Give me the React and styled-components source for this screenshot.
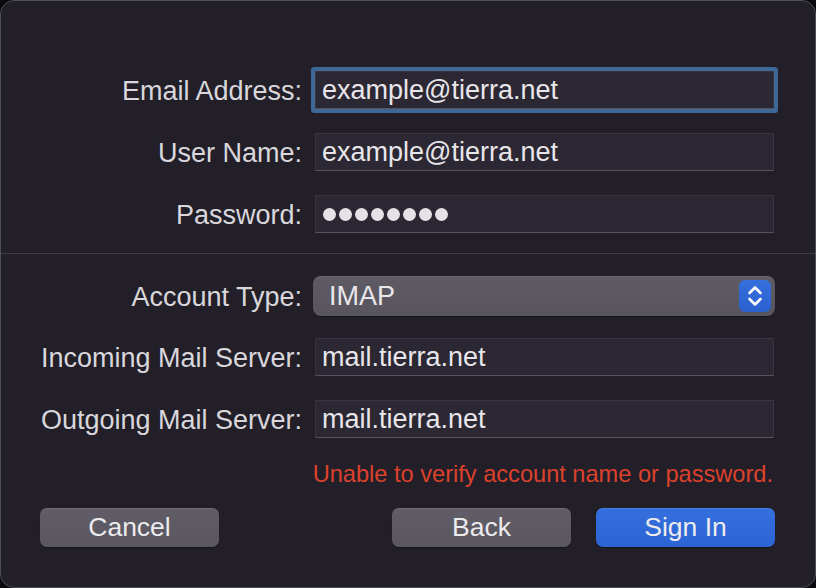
import React from "react";
import styled, { createGlobalStyle } from "styled-components";

const Global = createGlobalStyle`
  html, body { margin: 0; padding: 0; background: #0c0b0e; }
  body { font-family: "Liberation Sans", Arial, sans-serif; }
  * { box-sizing: border-box; }
`;

const Window = styled.div`
  width: 816px;
  height: 588px;
  border-radius: 14px;
  background: #221f29;
  border: 1px solid #4f4d56;
  box-shadow: 0 0 0 1px #08070a;
  overflow: hidden;
  display: flex;
  flex-direction: column;
  padding-top: 70px;
`;

const Row = styled.div`
  display: grid;
  grid-template-columns: 301px 459px;
  column-gap: 13px;
  align-items: center;
  margin-top: ${(p) => p.$mt || 0}px;
`;

const Label = styled.label`
  text-align: right;
  font-size: 27px;
  line-height: 32px;
  padding-top: 2px;
  color: #d9d7dc;
  white-space: nowrap;
`;

const Field = styled.div`
  height: 38px;
  display: flex;
  align-items: center;
  padding-left: 6px;
  background: #2c2833;
  border: 1px solid #383540;
  border-bottom-color: #56535c;
  font-size: 27px;
  color: #e8e6ea;
  border-radius: ${(p) => (p.$focused ? "1px" : "0")};
  box-shadow: ${(p) => (p.$focused ? "0 0 0 4px #3e6997" : "none")};
`;

const Dots = styled.div`
  display: flex;
  gap: 3px;
  padding-left: 1px;
`;

const Dot = styled.span`
  width: 13px;
  height: 13px;
  border-radius: 50%;
  background: #e4e2e7;
`;

const Divider = styled.div`
  height: 1px;
  background: #3d3a44;
  margin: 20px 0 0;
`;

const Popup = styled.div`
  height: 40px;
  margin-left: -2px;
  margin-right: -1px;
  border-radius: 8px;
  background: linear-gradient(#5e5b65, #58555f);
  box-shadow: 0 1px 1px rgba(0, 0, 0, 0.35), inset 0 1px 0 rgba(255, 255, 255, 0.08);
  display: flex;
  align-items: center;
  justify-content: space-between;
  padding: 0 4px 0 16px;
  font-size: 27px;
  color: #e9e7eb;
`;

const Stepper = styled.div`
  width: 32px;
  height: 32px;
  border-radius: 6px;
  background: linear-gradient(#3470dd, #2b60cf);
  display: flex;
  align-items: center;
  justify-content: center;
`;

const ErrorText = styled.div`
  margin-top: 23px;
  text-align: right;
  padding-right: 42px;
  font-size: 23.6px;
  line-height: 26px;
  color: #dc412c;
`;

const Buttons = styled.div`
  margin-top: 21px;
  display: flex;
  padding: 0 40px 0 39px;
  gap: 25px;
`;

const Spacer = styled.div`
  flex: 1;
`;

const Button = styled.button`
  width: 179px;
  height: 39px;
  border: none;
  border-radius: 7px;
  font-family: inherit;
  font-size: 26.5px;
  color: #ecebee;
  background: ${(p) =>
    p.$primary ? "linear-gradient(#3470dd, #2d63d3)" : "linear-gradient(#605d66, #5a5760)"};
  box-shadow: 0 1px 1px rgba(0, 0, 0, 0.35), inset 0 1px 0 rgba(255, 255, 255, 0.1);
  padding: 0;
`;

const Chevrons = () => (
  <svg width="22" height="26" viewBox="0 0 22 26" fill="none" stroke="#fff" strokeWidth="2.6" strokeLinecap="round" strokeLinejoin="round">
    <path d="M5.5 10 L11 4.5 L16.5 10" />
    <path d="M5.5 16 L11 21.5 L16.5 16" />
  </svg>
);

export default function App() {
  return (
    <>
      <Global />
      <Window>
        <Row>
          <Label>Email Address:</Label>
          <Field $focused>example@tierra.net</Field>
        </Row>
        <Row $mt={24}>
          <Label>User Name:</Label>
          <Field>example@tierra.net</Field>
        </Row>
        <Row $mt={24}>
          <Label>Password:</Label>
          <Field>
            <Dots>
              {Array.from({ length: 8 }).map((_, i) => (
                <Dot key={i} />
              ))}
            </Dots>
          </Field>
        </Row>
        <Divider />
        <Row $mt={22}>
          <Label>Account Type:</Label>
          <Popup>
            <span>IMAP</span>
            <Stepper>
              <Chevrons />
            </Stepper>
          </Popup>
        </Row>
        <Row $mt={22}>
          <Label>Incoming Mail Server:</Label>
          <Field>mail.tierra.net</Field>
        </Row>
        <Row $mt={24}>
          <Label>Outgoing Mail Server:</Label>
          <Field>mail.tierra.net</Field>
        </Row>
        <ErrorText>Unable to verify account name or password.</ErrorText>
        <Buttons>
          <Button>Cancel</Button>
          <Spacer />
          <Button>Back</Button>
          <Button $primary>Sign In</Button>
        </Buttons>
      </Window>
    </>
  );
}
